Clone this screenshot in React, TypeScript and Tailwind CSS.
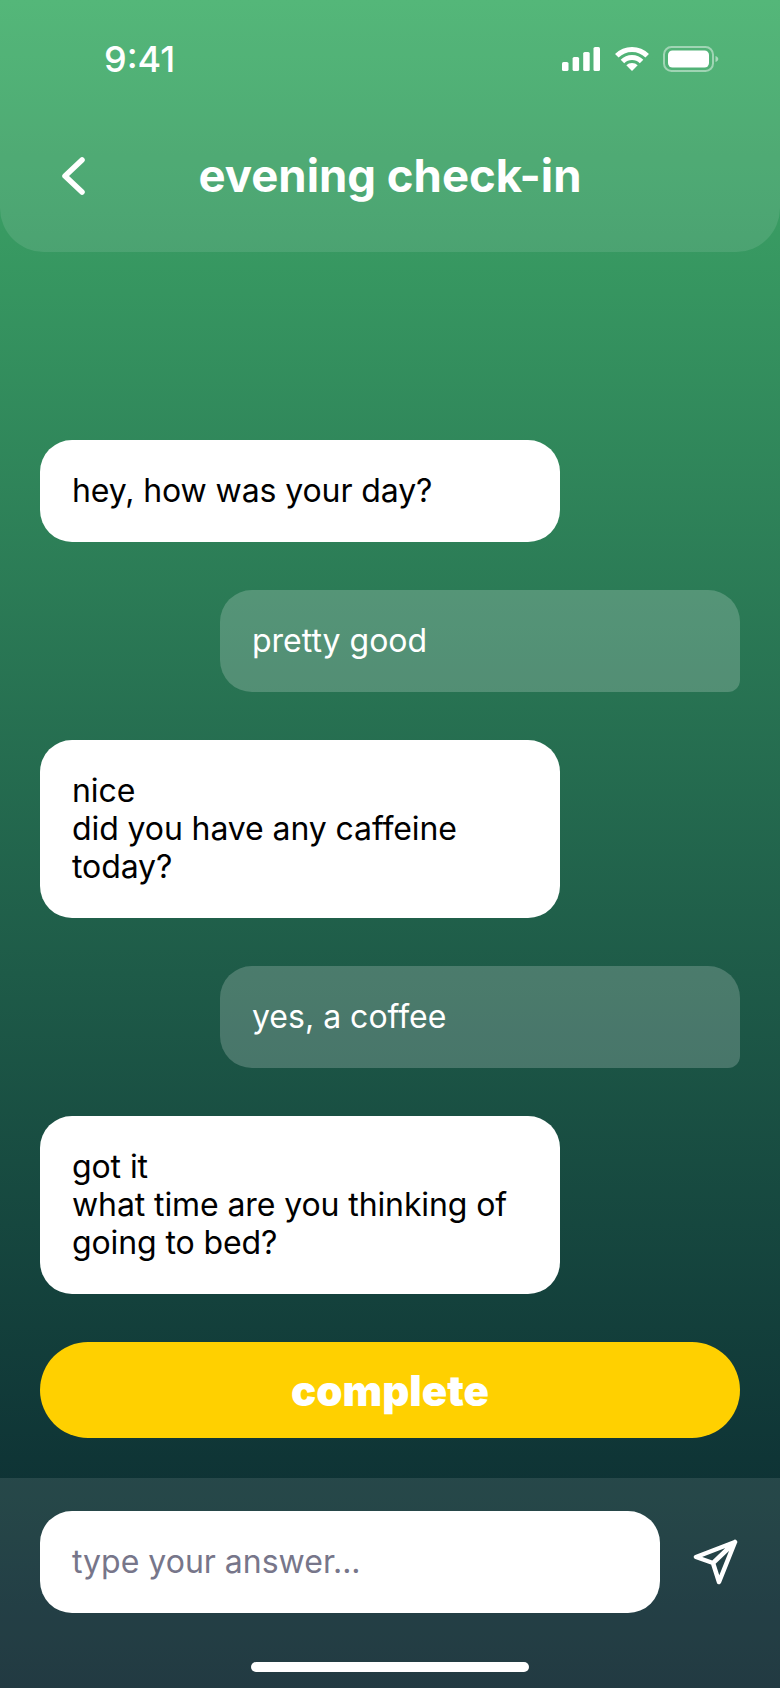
import React from 'react';

const bot = 'w-[520px] self-start rounded-[32px] bg-white px-8 py-8 text-[32px] leading-[38px] tracking-[-0.1px] text-black';
const me = 'w-[520px] self-end rounded-[32px] rounded-br-[12px] bg-white/20 px-8 py-8 text-[32px] leading-[38px] text-white';

function StatusIcons() {
  return (
    <div className="flex items-center">
      <svg width="38" height="24" viewBox="0 0 38 24" fill="#fff">
        <rect x="0" y="15" width="6.5" height="9" rx="1.6" />
        <rect x="10.6" y="10" width="6.5" height="14" rx="1.6" />
        <rect x="21.2" y="5" width="6.5" height="19" rx="1.6" />
        <rect x="31.5" y="0" width="6.5" height="24" rx="1.6" />
      </svg>
      <svg className="ml-[14px]" width="36" height="26" viewBox="0 0 36 26" fill="none" stroke="#fff" strokeWidth="5">
        <path d="M2.8 9.8A21.5 21.5 0 0 1 33.2 9.8" />
        <path d="M8.45 15.45A13.5 13.5 0 0 1 27.55 15.45" />
        <path d="M18 25L12.3 19.3A8 8 0 0 1 23.7 19.3Z" fill="#fff" stroke="none" />
      </svg>
      <svg className="ml-[13px]" width="56" height="26" viewBox="0 0 56 26" fill="none">
        <rect x="1" y="1" width="49" height="24" rx="7.5" stroke="#fff" strokeOpacity="0.45" strokeWidth="2" />
        <rect x="5" y="4.5" width="41" height="17" rx="4.5" fill="#fff" />
        <path d="M52.5 10v6c1.6-.6 2.8-1.6 2.8-3s-1.2-2.4-2.8-3z" fill="#fff" fillOpacity="0.5" />
      </svg>
    </div>
  );
}

export default function App() {
  return (
    <div className="flex h-[1688px] w-[780px] flex-col overflow-hidden bg-gradient-to-b from-[#41af6a] to-[#09242d] font-['Inter',sans-serif]">
      <header className="h-[252px] shrink-0 rounded-b-[44px] bg-white/10">
        <div className="flex items-center justify-between pl-[104px] pr-[61px] pt-[41px]">
          <span className="text-[36px] font-medium leading-[36px] text-white">9:41</span>
          <StatusIcons />
        </div>
        <div className="relative mt-[69px] flex h-[60px] items-center justify-center">
          <svg className="absolute left-[58px] top-[9px]" width="30" height="42" viewBox="0 0 30 42" fill="none" stroke="#fff" strokeWidth="5.5" strokeLinecap="round" strokeLinejoin="round">
            <path d="M24 5L7 21l17 16" />
          </svg>
          <h1 className="text-[45.5px] font-bold leading-[60px] text-white">evening check-in</h1>
        </div>
      </header>

      <main className="flex flex-1 flex-col justify-end gap-12 px-10 pb-10">
        <div className={bot}>hey, how was your day?</div>
        <div className={me}>pretty good</div>
        <div className={bot}>
          nice
          <br />
          did you have any caffeine today?
        </div>
        <div className={me}>yes, a coffee</div>
        <div className={bot}>
          got it
          <br />
          what time are you thinking of going to bed?
        </div>
        <button className="h-24 w-full rounded-full bg-[#ffd000] text-[42px] font-black text-white">complete</button>
      </main>

      <footer className="flex h-[210px] shrink-0 flex-col bg-white/10 px-10 pt-[33px]">
        <div className="flex items-center justify-between">
          <div className="w-[620px] rounded-[32px] bg-white px-8 py-8 text-[32px] leading-[38px] text-[#77768a]">type your answer...</div>
          <svg className="mr-[2px] mt-[2px]" width="48" height="48" viewBox="0 0 48 48" fill="none" stroke="#fff" strokeWidth="4.5" strokeLinecap="round" strokeLinejoin="round">
            <path d="M45 3L6 18l17 6 6 19zM23 24L45 3" />
          </svg>
        </div>
        <div className="mx-auto mt-[49px] h-[10px] w-[278px] rounded-full bg-white" />
      </footer>
    </div>
  );
}
